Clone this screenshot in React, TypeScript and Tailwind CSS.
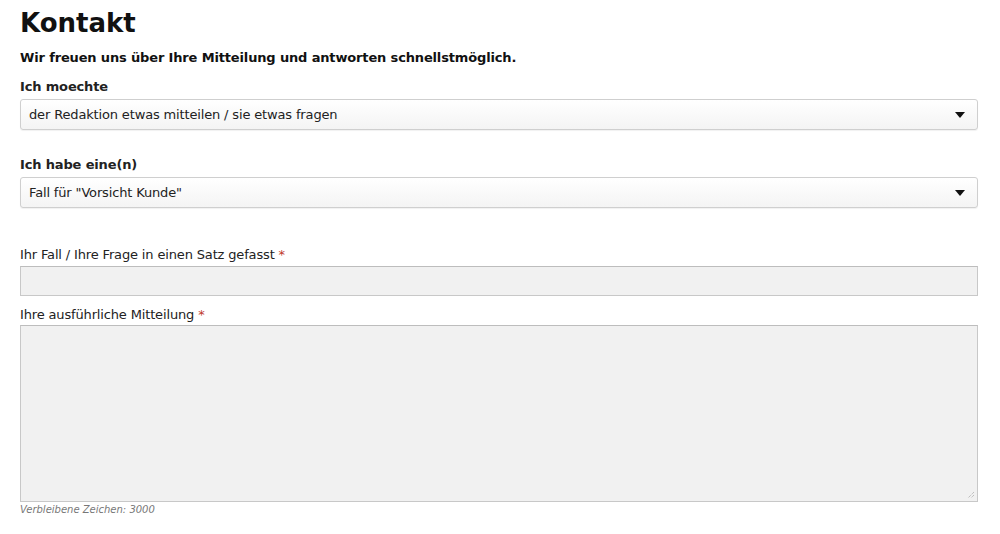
import { ReactNode } from 'react';

function Label({ children, bold, required }: { children: ReactNode; bold?: boolean; required?: boolean }) {
  return (
    <div className={`text-[13px] leading-[16px] tracking-[-0.15px] text-[#222] ${bold ? 'font-bold' : ''}`}>
      {children}
      {required && <span className="text-[#c0392b]"> *</span>}
    </div>
  );
}

function Select({ value }: { value: string }) {
  return (
    <div className="mt-[4px] flex h-[31px] items-center justify-between rounded-[3px] border border-[#cfcfcf] bg-gradient-to-b from-white to-[#f4f4f4] pl-[8px] pr-[12px] text-[13px] tracking-[-0.15px] text-[#222] shadow-[0_1px_1px_rgba(0,0,0,0.06)]">
      <span>{value}</span>
      <svg width="10" height="6" viewBox="0 0 10 6">
        <path d="M0 0 H10 L5 6 Z" fill="#111" />
      </svg>
    </div>
  );
}

export default function App() {
  return (
    <div className="min-h-[534px] bg-white pl-[20px] pr-[22px] pt-[7px] text-[#111]" style={{ fontFamily: '"DejaVu Sans", Verdana, sans-serif' }}>
      <h1 className="text-[26px] font-bold leading-[32px]">Kontakt</h1>
      <p className="mt-[11px] text-[13px] font-bold leading-[16px] tracking-[-0.15px]">
        Wir freuen uns über Ihre Mitteilung und antworten schnellstmöglich.
      </p>

      <div className="mt-[13px]">
        <Label bold>Ich moechte</Label>
        <Select value="der Redaktion etwas mitteilen / sie etwas fragen" />
      </div>

      <div className="mt-[27px]">
        <Label bold>Ich habe eine(n)</Label>
        <Select value={'Fall für "Vorsicht Kunde"'} />
      </div>

      <div className="mt-[39px]">
        <Label required>Ihr Fall / Ihre Frage in einen Satz gefasst</Label>
        <div className="mt-[3px] h-[30px] border border-[#c8c8c8] border-t-[#bdbdbd] bg-[#f1f1f1]" />
      </div>

      <div className="mt-[11px]">
        <Label required>Ihre ausführliche Mitteilung</Label>
        <div className="relative mt-[2px] h-[177px] border border-[#c8c8c8] border-t-[#bdbdbd] bg-[#f1f1f1]">
          <svg className="absolute bottom-[2px] right-[2px]" width="8" height="8" viewBox="0 0 8 8">
            <path d="M7 1 L1 7 M7 4 L4 7" stroke="#aaa" strokeWidth="1" strokeDasharray="1 1" />
          </svg>
        </div>
        <div className="mt-[1px] text-[10px] italic leading-[13px] text-[#777]">Verbleibene Zeichen: 3000</div>
      </div>
    </div>
  );
}
